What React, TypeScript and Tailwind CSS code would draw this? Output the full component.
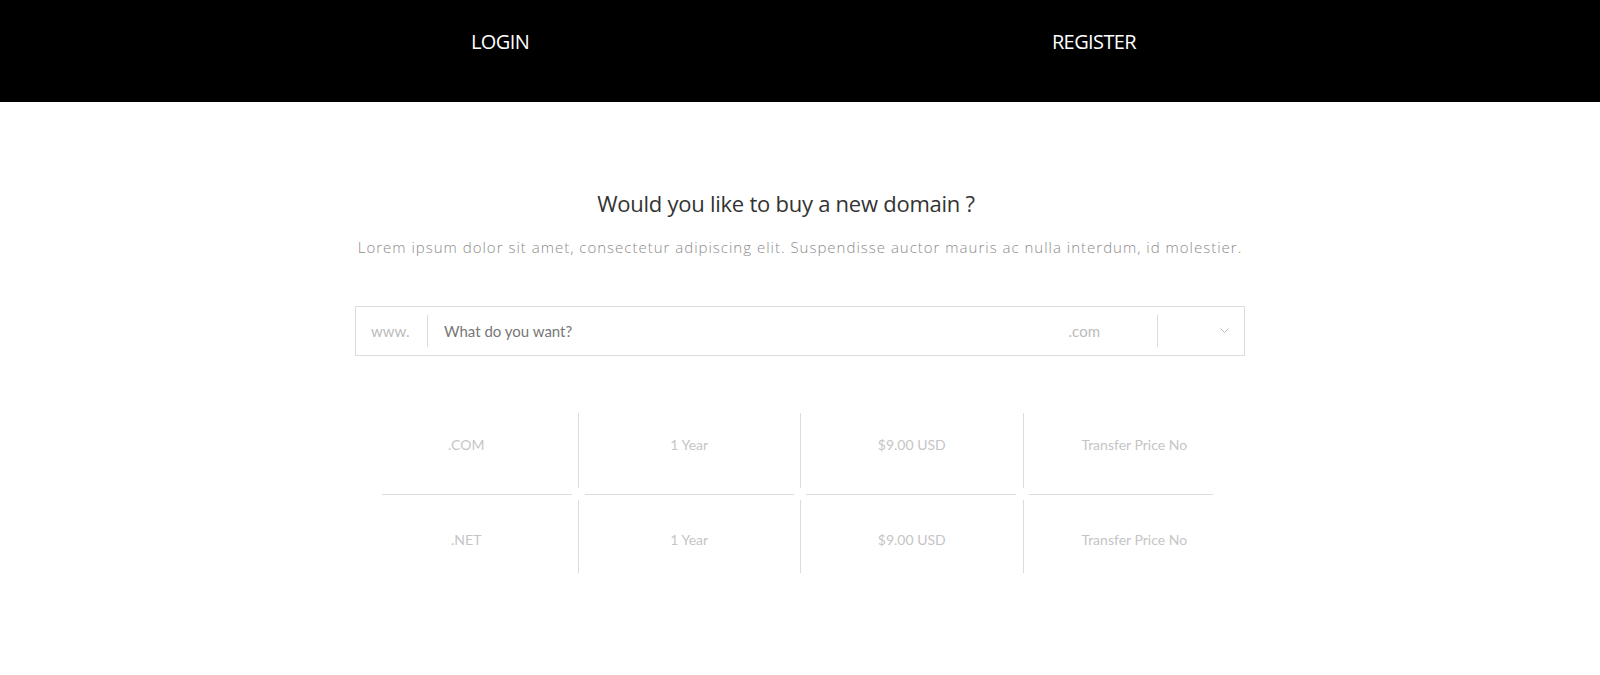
import React from "react";

const rows = [
  [".COM", "1 Year", "$9.00 USD", "Transfer Price No"],
  [".NET", "1 Year", "$9.00 USD", "Transfer Price No"],
];

export default function App() {
  return (
    <div className="min-h-[675px] bg-white">
      <header className="h-[102px] bg-black flex font-['Open_Sans',sans-serif] text-white text-[20px] leading-[26px] tracking-[-0.6px]">
        <div className="ml-[200px] w-[600px] text-center pt-[29px]">LOGIN</div>
        <div className="w-[588px] text-center pt-[29px]">REGISTER</div>
      </header>

      <h1 className="mt-[86px] pr-[28px] text-center font-['Open_Sans',sans-serif] text-[22px] leading-[30px] tracking-[-0.25px] text-[#333]">
        Would you like to buy a new domain ?
      </h1>
      <p className="mt-[19px] text-center font-['Open_Sans',sans-serif] font-light text-[15px] leading-[20px] tracking-[1px] text-[#8c8c8c]">
        Lorem ipsum dolor sit amet, consectetur adipiscing elit. Suspendisse auctor mauris ac nulla interdum, id molestier.
      </p>

      <div className="mt-[49px] mx-auto w-[890px] h-[50px] border border-[#dcdcdc] flex items-center font-['Lato',sans-serif] text-[15px]">
        <div className="w-[71px] pl-[15px] text-[#bbb]">www.</div>
        <div className="w-px h-[32px] bg-[#dcdcdc]" />
        <div className="flex-1 pl-[16px] text-[#777]">What do you want?</div>
        <span className="mr-[57px] text-[#bbb]">.com</span>
        <div className="w-px h-[32px] bg-[#dcdcdc]" />
        <div className="w-[86px] flex justify-end pr-[15px]">
          <svg width="9" height="6" viewBox="0 0 9 6">
            <polyline points="0.5,0.5 4.5,4.5 8.5,0.5" fill="none" stroke="#bbb" strokeWidth="1" />
          </svg>
        </div>
      </div>

      <div className="mt-[57px] mx-auto w-[890px] font-['Lato',sans-serif] text-[14px] leading-[20px] text-[#c5c5c5]">
        <div className="grid grid-cols-4 h-[75px]">
          {rows[0].map((t, i) => (
            <div key={i} className={`text-center pt-[22px] ${i > 0 ? "border-l border-[#dcdcdc]" : ""}`}>
              {t}
            </div>
          ))}
        </div>
        <div className="grid grid-cols-4 mt-[6px] h-px">
          <div className="ml-[27px] mr-[6px] bg-[#dcdcdc]" />
          <div className="ml-[7px] mr-[6px] bg-[#dcdcdc]" />
          <div className="ml-[6px] mr-[7px] bg-[#dcdcdc]" />
          <div className="ml-[6px] mr-[32px] bg-[#dcdcdc]" />
        </div>
        <div className="grid grid-cols-4 h-[73px] mt-[5px]">
          {rows[1].map((t, i) => (
            <div key={i} className={`text-center pt-[30px] ${i > 0 ? "border-l border-[#dcdcdc]" : ""}`}>
              {t}
            </div>
          ))}
        </div>
      </div>
    </div>
  );
}
